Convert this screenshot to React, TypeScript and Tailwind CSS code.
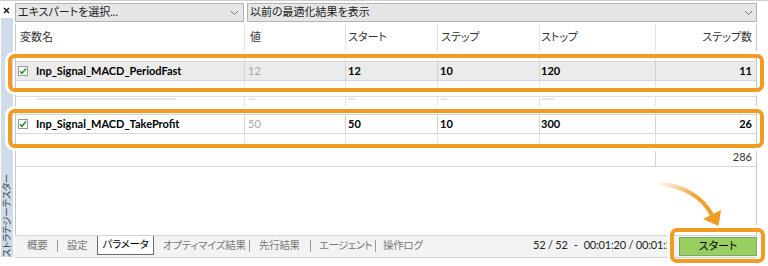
import React from "react";

const FONT =
  "font-['Lato','Noto_Sans_CJK_JP',sans-serif] [font-feature-settings:'palt']";
const GRID = "grid grid-cols-[229px_101px_92px_102px_116px_100px]";

function Check() {
  return (
    <span className="w-[10px] h-[10px] border border-[#9a9a9a] bg-white flex items-center justify-center shrink-0">
      <svg width="8" height="8" viewBox="0 0 8 8">
        <path d="M1 4.2 L3 6.3 L7 1.6" stroke="#1f9a2e" strokeWidth="1.6" fill="none" />
      </svg>
    </span>
  );
}

function Chevron() {
  return (
    <svg width="9" height="6" viewBox="0 0 9 6" className="shrink-0">
      <path d="M1 1 L4.5 4.5 L8 1" stroke="#777" strokeWidth="1" fill="none" />
    </svg>
  );
}

type Row = { name: string; v: string; s: string; st: string; sp: string; n: string };

function DataRow({ r, gray }: { r: Row; gray?: boolean }) {
  const bg = gray ? "bg-[#ebebeb]" : "bg-white";
  const cell = `flex items-center border-r border-[#d4d4d4] ${bg}`;
  return (
    <div className={`${GRID} h-[20px] border-y border-[#d6d6d6] text-[11px]`}>
      <div className={`${cell} pl-[2px] gap-[8px]`}>
        <Check />
        <span className="font-bold text-black">{r.name}</span>
      </div>
      <div className={`${cell} pl-[3px] text-[#a8a8a8]`}>{r.v}</div>
      <div className={`${cell} pl-[2px] font-bold text-black`}>{r.s}</div>
      <div className={`${cell} pl-[2px] font-bold text-black`}>{r.st}</div>
      <div className={`${cell} pl-[1px] font-bold text-black`}>{r.sp}</div>
      <div className={`flex items-center justify-end pr-[4px] font-bold text-black ${bg}`}>{r.n}</div>
    </div>
  );
}

function FaintRow({ h, align, line, widths }: { h: number; align: "end" | "start"; line?: boolean; widths: number[] }) {
  const cell = `flex ${align === "end" ? "items-end pb-[1px]" : "items-start pt-[1px]"} border-r border-[#e4e4e4]`;
  const pads = ["pl-[20px]", "pl-[3px]", "pl-[2px]", "pl-[2px]", "pl-[1px]"];
  return (
    <div className={`${GRID} ${line ? "border-b border-[#dcdcdc]" : ""}`} style={{ height: h }}>
      {pads.map((p, i) => (
        <div key={i} className={`${cell} ${p}`}>
          {widths[i] > 0 && <span className="h-[2px] bg-[#e6e6e6] rounded-[1px]" style={{ width: widths[i] }} />}
        </div>
      ))}
      <div />
    </div>
  );
}

export default function App() {
  const rows: Row[] = [
    { name: "Inp_Signal_MACD_PeriodFast", v: "12", s: "12", st: "10", sp: "120", n: "11" },
    { name: "Inp_Signal_MACD_TakeProfit", v: "50", s: "50", st: "10", sp: "300", n: "26" },
  ];
  const hcell = "flex items-center border-r border-[#e2e2e2]";
  const tab = "h-[19px] flex items-center whitespace-nowrap shrink-0";
  const sep = "w-[1px] h-[12px] mt-[4px] bg-[#9a9a9a] shrink-0";
  return (
    <div className={`relative w-[768px] h-[266px] overflow-hidden bg-white border-t border-[#cfcfcf] ${FONT}`}>
      <div className="flex h-full">
        {/* sidebar */}
        <div className="w-[15px] flex flex-col shrink-0">
          <div className="h-[17px] flex items-start justify-start pl-[3px] pt-[6px]">
            <svg width="7" height="7" viewBox="0 0 7 7">
              <path d="M1 1 L6 6 M6 1 L1 6" stroke="#222" strokeWidth="1.6" />
            </svg>
          </div>
          <div className="h-[239px] ml-[1px] w-[12px] bg-[#cfdcea] flex flex-col justify-end items-center">
            <span className="text-[9.5px] leading-[12px] tracking-[-0.3px] text-[#3a3a3a] [writing-mode:vertical-rl] [text-orientation:sideways] rotate-180 whitespace-nowrap">
              ストラテジーテスター
            </span>
          </div>
        </div>

        {/* main */}
        <div className="w-[742px] flex flex-col shrink-0">
          {/* dropdowns */}
          <div className="flex gap-[3px] pt-[2px] h-[21px]">
            <div className="w-[229px] h-[19px] bg-[#e6e6e6] border border-[#b4b4b4] flex items-center justify-between pl-[2px] pr-[4px] text-[11px] text-[#222]">
              <span>エキスパートを選択...</span>
              <Chevron />
            </div>
            <div className="w-[510px] h-[19px] bg-[#e6e6e6] border border-[#b4b4b4] flex items-center justify-between pl-[2px] pr-[3px] text-[11px] text-[#222]">
              <span>以前の最適化結果を表示</span>
              <Chevron />
            </div>
          </div>

          {/* table */}
          <div className="mt-[2px] h-[211px] border-x border-[#c8c8c8] flex flex-col">
            <div className={`${GRID} h-[26px] text-[11px] text-[#333]`}>
              <div className={`${hcell} pl-[4px]`}>変数名</div>
              <div className={`${hcell} pl-[5px]`}>値</div>
              <div className={`${hcell} pl-[2px]`}>スタート</div>
              <div className={`${hcell} pl-[3px]`}>ステップ</div>
              <div className={`${hcell} pl-[1px]`}>ストップ</div>
              <div className="flex items-center justify-end pr-[4px]">ステップ数</div>
            </div>
            <FaintRow h={11} align="start" widths={[0, 0, 0, 0, 0]} />
            <DataRow r={rows[0]} gray />
            <FaintRow h={16} align="end" line widths={[130, 10, 10, 6, 16]} />
            <FaintRow h={17} align="start" widths={[140, 8, 8, 8, 14]} />
            <DataRow r={rows[1]} />
            <FaintRow h={13} align="end" widths={[120, 10, 10, 0, 16]} />
            <div className={`${GRID} h-[20px] border-y border-[#d6d6d6] text-[11px] text-[#333]`}>
              <div className="col-span-5 border-r border-[#d4d4d4]" />
              <div className="flex items-center justify-end pr-[4px]">286</div>
            </div>
            <div className="flex-1" />
          </div>

          {/* tabs */}
          <div className="h-[23px] border-t border-[#7a7a7a] border-b border-[#d4d4d4] bg-[#f3f3f3] flex items-start text-[10.5px] tracking-[-0.3px] text-[#777]">
            <span className="w-[12px] shrink-0" />
            <span className={`${tab} w-[30px]`}>概要</span>
            <span className={sep} />
            <span className="w-[9px] shrink-0" />
            <span className={`${tab} w-[30px]`}>設定</span>
            <span className={`${tab} w-[57px] bg-white border-x border-b border-[#6a6a6a] justify-center text-black`}>
              パラメータ
            </span>
            <span className="w-[9px] shrink-0" />
            <span className={`${tab} w-[86px]`}>オプティマイズ結果</span>
            <span className={sep} />
            <span className="w-[9px] shrink-0" />
            <span className={`${tab} w-[51px]`}>先行結果</span>
            <span className={sep} />
            <span className="w-[8px] shrink-0" />
            <span className={`${tab} w-[56px] tracking-[-0.6px]`}>エージェント</span>
            <span className={sep} />
            <span className="w-[7px] shrink-0" />
            <span className={`${tab} w-[60px]`}>操作ログ</span>
            <span className="w-[90px] shrink-0" />
            <span className={`${tab} w-[136px] overflow-hidden text-[11px] tracking-[-0.2px] text-[#222]`}>
              <span>52 / 52</span>
              <span className="ml-[6px]">-</span>
              <span className="ml-[6px]">00:01:20 / 00:01:20</span>
            </span>
            <span className="w-[10px] shrink-0" />
            <span className={`${tab} w-[78px] mt-[1px] bg-[#98cf60] border border-[#7fa860] justify-center text-[11px] tracking-normal text-black`}>
              スタート
            </span>
          </div>
        </div>
      </div>

      {/* highlight overlays */}
      <div className="absolute left-[8px] top-[53px] w-[756px] h-[38px] rounded-[7px] border-[4px] border-[#f29b22] shadow-[0_0_0_3px_white]" />
      <div className="absolute left-[8px] top-[108px] w-[756px] h-[39px] rounded-[7px] border-[4px] border-[#f29b22] shadow-[0_0_0_3px_white]" />
      <div className="absolute left-[670px] top-[227px] w-[95px] h-[35px] rounded-[7px] border-[4px] border-[#f29b22] shadow-[0_0_0_3px_white]" />

      <svg className="absolute left-0 top-0 pointer-events-none" width="768" height="266" viewBox="0 0 768 266">
        <defs>
          <linearGradient id="ag" x1="656" y1="182" x2="715" y2="215" gradientUnits="userSpaceOnUse">
            <stop offset="0" stopColor="#f29b22" stopOpacity="0" />
            <stop offset="0.6" stopColor="#f29b22" stopOpacity="0.9" />
            <stop offset="1" stopColor="#f29b22" stopOpacity="1" />
          </linearGradient>
        </defs>
        <path d="M656 182 Q697 186 712 214" stroke="url(#ag)" strokeWidth="4" fill="none" />
        <path d="M703 218 L721 209 L718.5 225 Z" fill="#f29b22" />
      </svg>
    </div>
  );
}
